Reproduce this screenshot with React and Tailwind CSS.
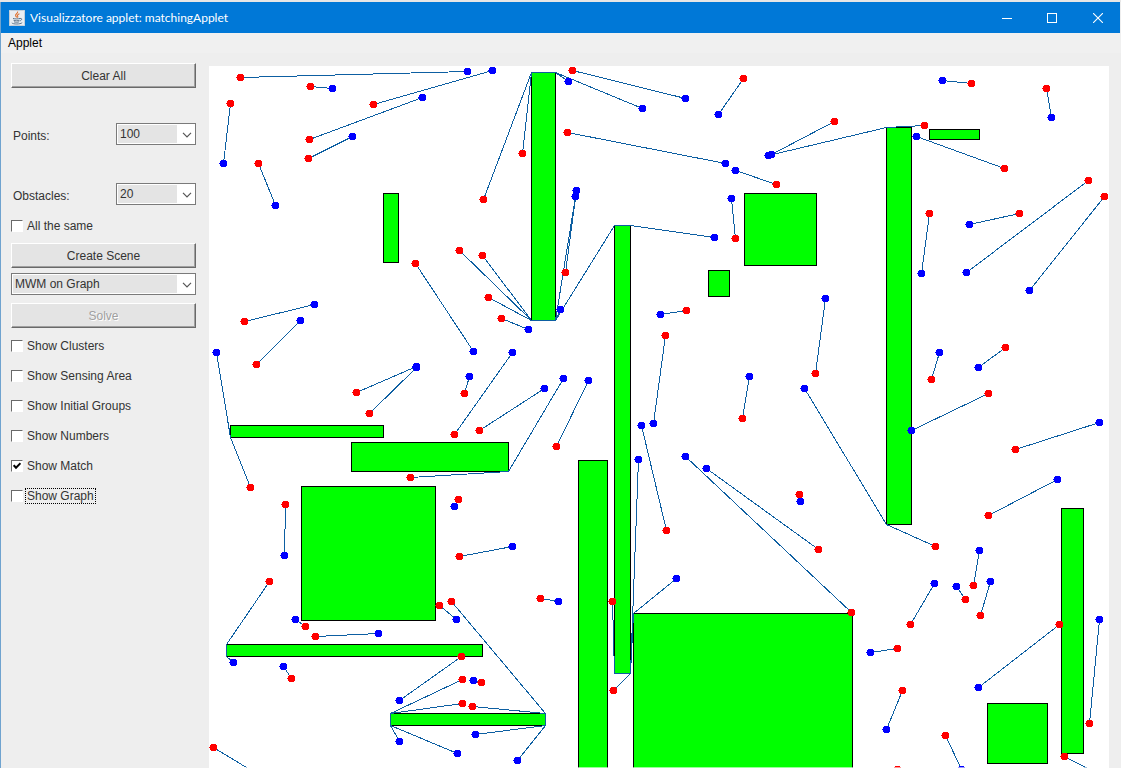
import { useState } from "react";

// Obstacles as [left, top, right, bottom]
const OBSTACLES = [
  [531, 72, 555, 320], [383, 193, 398, 262], [614, 225, 630, 673], [744, 193, 816, 265],
  [708, 270, 729, 296], [886, 127, 911, 524], [929, 129, 979, 139], [230, 425, 383, 437],
  [351, 442, 508, 471], [301, 486, 435, 620], [226, 644, 482, 656], [390, 713, 545, 725],
  [578, 460, 607, 790], [633, 613, 852, 790], [1061, 508, 1083, 753], [987, 703, 1047, 763],
];

// Matched pairs: red point, blue point, optional corners of the path between them
const MATCHES = [
  [[240, 77], [467, 71]],
  [[310, 86], [332, 88]],
  [[373, 104], [492, 70]],
  [[230, 103], [223, 163]],
  [[309, 139], [422, 97]],
  [[308, 158], [352, 136]],
  [[258, 163], [275, 205]],
  [[483, 199], [568, 81], [[531, 72], [555, 72]]],
  [[522, 153], [642, 108], [[531, 72], [555, 72]]],
  [[572, 70], [685, 98]],
  [[743, 78], [718, 114]],
  [[567, 132], [725, 163]],
  [[776, 184], [735, 170]],
  [[735, 238], [731, 198]],
  [[834, 121], [771, 154]],
  [[924, 125], [768, 155], [[886, 127]]],
  [[1004, 168], [916, 136]],
  [[971, 83], [942, 80]],
  [[1046, 88], [1051, 117]],
  [[1019, 213], [969, 224]],
  [[929, 213], [921, 273]],
  [[1088, 180], [966, 272]],
  [[1104, 196], [1029, 290]],
  [[565, 272], [576, 190]],
  [[459, 250], [575, 196], [[531, 320], [555, 320]]],
  [[482, 255], [714, 237], [[531, 320], [555, 320], [614, 225], [630, 225]]],
  [[488, 297], [560, 309], [[531, 320], [555, 320]]],
  [[501, 318], [528, 329]],
  [[415, 263], [473, 351]],
  [[244, 321], [314, 304]],
  [[256, 364], [300, 320]],
  [[250, 487], [216, 352], [[230, 437]]],
  [[356, 392], [416, 366]],
  [[369, 413], [416, 367]],
  [[464, 393], [469, 376]],
  [[454, 434], [512, 352]],
  [[479, 430], [544, 388]],
  [[410, 477], [563, 378], [[508, 471]]],
  [[556, 446], [588, 380]],
  [[458, 499], [454, 506]],
  [[285, 504], [284, 555]],
  [[459, 556], [512, 546]],
  [[269, 581], [233, 662], [[226, 644], [226, 656]]],
  [[305, 626], [295, 619]],
  [[315, 636], [378, 633]],
  [[439, 605], [456, 619]],
  [[451, 601], [517, 760], [[545, 713], [545, 725]]],
  [[291, 678], [283, 666]],
  [[461, 656], [399, 700]],
  [[462, 679], [399, 741], [[390, 713], [390, 725]]],
  [[462, 703], [457, 753], [[390, 713], [390, 725]]],
  [[472, 706], [475, 734], [[545, 713], [545, 725]]],
  [[481, 682], [473, 680]],
  [[213, 747], [279, 787]],
  [[540, 598], [558, 601]],
  [[686, 310], [660, 314]],
  [[665, 335], [653, 423]],
  [[666, 530], [641, 425]],
  [[612, 601], [638, 459], [[614, 673], [630, 673]]],
  [[613, 690], [676, 578], [[630, 673], [633, 613]]],
  [[742, 418], [749, 376]],
  [[851, 612], [685, 456]],
  [[818, 549], [706, 468]],
  [[799, 494], [800, 501]],
  [[935, 546], [804, 388], [[886, 524]]],
  [[815, 373], [825, 298]],
  [[931, 379], [939, 352]],
  [[1005, 347], [978, 367]],
  [[988, 393], [911, 430]],
  [[1015, 449], [1099, 422]],
  [[988, 515], [1057, 479]],
  [[973, 585], [979, 550]],
  [[965, 599], [956, 586]],
  [[980, 615], [990, 581]],
  [[910, 624], [934, 583]],
  [[897, 648], [870, 652]],
  [[902, 690], [886, 729]],
  [[1059, 624], [978, 687]],
  [[1089, 723], [1099, 619]],
  [[945, 735], [961, 769]],
  [[897, 769], [892, 790]],
  [[1064, 756], [1106, 778]],
];

const DOT = "h5v1h1v5h-1v1h-5v-1h-1v-2h-1v-1h1v-2h1z";

function Dots({ points, color }) {
  return <path fill={color} d={points.map(([x, y]) => `M${x - 2} ${y - 3}${DOT}`).join("")} />;
}

function Scene({ showMatch }) {
  return (
    <svg className="block h-[702px] w-[900px] bg-white" viewBox="209 66 900 702" shapeRendering="crispEdges" role="img" aria-label="Scene">
      <g fill="#00ff00" stroke="#000000">
        {OBSTACLES.map(([l, t, r, b]) => (
          <rect key={`${l}-${t}`} x={l + 0.5} y={t + 0.5} width={r - l} height={b - t} />
        ))}
      </g>
      {showMatch && (
        <g fill="none" stroke="#0d5fa2">
          {MATCHES.map(([a, b, via = []]) => (
            <polyline key={a.join()} points={[a, ...via, b].map(([x, y]) => `${x + 0.5},${y + 0.5}`).join(" ")} />
          ))}
        </g>
      )}
      <Dots color="#0000ff" points={MATCHES.map((m) => m[1])} />
      <Dots color="#ff0000" points={MATCHES.map((m) => m[0])} />
      <rect x="209" y="767" width="900" height="1" fill="#ffffff" fillOpacity="0.6" />
    </svg>
  );
}

function PanelButton({ children, disabled }) {
  return (
    <button
      type="button"
      disabled={disabled}
      className="block h-[25px] w-full border border-t-white border-l-white border-r-[#696969] border-b-[#696969] bg-[#e4e4e4] text-center text-[12px] leading-4 text-[#333] shadow-[inset_-1px_-1px_0_#a0a0a0] disabled:text-[#a0a0a0] disabled:[text-shadow:1px_1px_0_#fff]"
    >
      {children}
    </button>
  );
}

function Dropdown({ id, label, options, className }) {
  return (
    <div className={`relative h-[22px] border border-[#7a7a7a] bg-white p-px ${className}`}>
      <select
        id={id}
        aria-label={label}
        className="block h-full w-full appearance-none bg-[linear-gradient(to_left,#fff_17px,#e4e4e4_17px)] pb-px pl-[2px] text-[12px] leading-4 text-[#333] outline-none"
      >
        {options.map((o) => (
          <option key={o}>{o}</option>
        ))}
      </select>
      <svg className="pointer-events-none absolute top-[8px] right-[3px] h-[6px] w-[10px]" viewBox="0 0 10 6" fill="none" stroke="#555" strokeWidth="1.2">
        <path d="M1 0.8 5 4.8 9 0.8" />
      </svg>
    </div>
  );
}

function Tick({ label, checked, onChange, focused }) {
  return (
    <label className="flex h-[15px] items-center gap-[2px] text-[12px] leading-[13px] text-[#333]">
      <span className="relative block size-3">
        <input
          type="checkbox"
          checked={checked}
          onChange={onChange}
          className="block size-3 appearance-none border border-t-[#696969] border-r-white border-b-white border-l-[#696969] bg-white outline-none"
        />
        {checked && (
          <svg className="pointer-events-none absolute top-[2px] left-[2px] size-2" viewBox="0 0 8 8" fill="none" stroke="#000" strokeWidth="2">
            <path d="M0.7 3.2 3 5.7 7.5 1.2" />
          </svg>
        )}
      </span>
      <span className={`border px-px pt-px ${focused ? "border-dotted border-black" : "border-transparent"}`}>{label}</span>
    </label>
  );
}

function JavaIcon() {
  return (
    <svg className="size-4" viewBox="0 0 16 16" fill="none">
      <rect width="16" height="16" rx="1" fill="#e9eef2" />
      <rect x="0.5" y="0.5" width="15" height="15" rx="1" stroke="#c3ced8" />
      <path d="M8.6 1.5c.8 1.9-3 2.7-1.9 4.4.4.6.8.9.9 1.5M10.4 3.7C8.5 4.6 8 5.3 8.7 6.2c.4.6.2 1-.3 1.4" stroke="#e0702c" strokeWidth="1.1" />
      <path d="M4 8.4c2 .7 5 .7 7 0M4.5 10.2c2 .7 4.3.7 6 0M5 11.8c1.5.6 3.7.6 5 0M11 8.5c2.3-.6 2.3 1.7-.3 2.5M2.8 12.9c1.4 1.5 8.5 1.5 10.4-.2" stroke="#526b82" strokeWidth="0.9" />
    </svg>
  );
}

const SHOW = ["Show Clusters", "Show Sensing Area", "Show Initial Groups", "Show Numbers", "Show Match", "Show Graph"];

export default function App() {
  const [ticks, setTicks] = useState({ "Show Match": true });
  const toggle = (name) => () => setTicks((t) => ({ ...t, [name]: !t[name] }));

  return (
    <div className="min-h-screen overflow-hidden bg-[#eeeeee] font-['Liberation_Sans',Arial,sans-serif]">
      <div className="h-[2px] bg-[#e6e6e6]" />
      <div className="border-l border-[#6fa3cf]">
        <header className="mr-px flex h-[31px] items-center bg-[#0078d7] pl-2 text-white">
          <JavaIcon />
          <h1 className="ml-[5px] flex-1 font-[Lato,'Open_Sans',sans-serif] text-[12px] leading-4">Visualizzatore applet: matchingApplet</h1>
          <button type="button" aria-label="Minimize" className="flex h-full w-[45px] items-center justify-center">
            <svg className="size-[10px]" viewBox="0 0 10 10" stroke="#fff" shapeRendering="crispEdges"><path d="M0 5.5H10" /></svg>
          </button>
          <button type="button" aria-label="Maximize" className="mr-px flex h-full w-[45px] items-center justify-center">
            <svg className="size-[10px]" viewBox="0 0 10 10" fill="none" stroke="#fff" shapeRendering="crispEdges"><path d="M0.5 0.5H9.5V9.5H0.5Z" /></svg>
          </button>
          <button type="button" aria-label="Close" className="flex h-full w-[45px] items-center justify-center">
            <svg className="size-[10px]" viewBox="0 0 10 10" stroke="#fff" strokeWidth="1.1"><path d="M0 0 10 10M10 0 0 10" /></svg>
          </button>
        </header>
        <nav className="h-[20px] bg-[#f0f0f0] pl-[7px]">
          <button type="button" className="block text-[12px] leading-5 text-black">Applet</button>
        </nav>
        <main className="flex items-start pt-[13px] pr-3">
          <section className="-mt-[3px] w-[208px] shrink-0 pr-[13px] pl-[10px]">
            <PanelButton>Clear All</PanelButton>
            <div className="mt-[35px] flex items-center justify-between text-[12px] text-[#333]">
              <label htmlFor="points" className="pt-1 pl-[2px] leading-4">Points:</label>
              <Dropdown id="points" options={["100", "50", "20"]} className="w-[80px]" />
            </div>
            <div className="mt-[38px] flex items-center justify-between text-[12px] text-[#333]">
              <label htmlFor="obstacles" className="pt-1 pl-[2px] leading-4">Obstacles:</label>
              <Dropdown id="obstacles" options={["20", "10", "5"]} className="w-[80px]" />
            </div>
            <div className="mt-[13px]">
              <Tick label="All the same" checked={!!ticks.same} onChange={toggle("same")} />
            </div>
            <div className="mt-[10px] flex flex-col gap-[5px]">
              <PanelButton>Create Scene</PanelButton>
              <Dropdown id="method" label="Method" options={["MWM on Graph"]} className="w-full" />
            </div>
            <div className="mt-2">
              <PanelButton disabled>Solve</PanelButton>
            </div>
            <div className="mt-[10px] flex flex-col gap-[15px]">
              {SHOW.map((name) => (
                <Tick key={name} label={name} checked={!!ticks[name]} onChange={toggle(name)} focused={name === "Show Graph"} />
              ))}
            </div>
          </section>
          <div className="min-w-0 flex-1 overflow-hidden bg-white">
            <Scene showMatch={!!ticks["Show Match"]} />
          </div>
        </main>
      </div>
    </div>
  );
}
